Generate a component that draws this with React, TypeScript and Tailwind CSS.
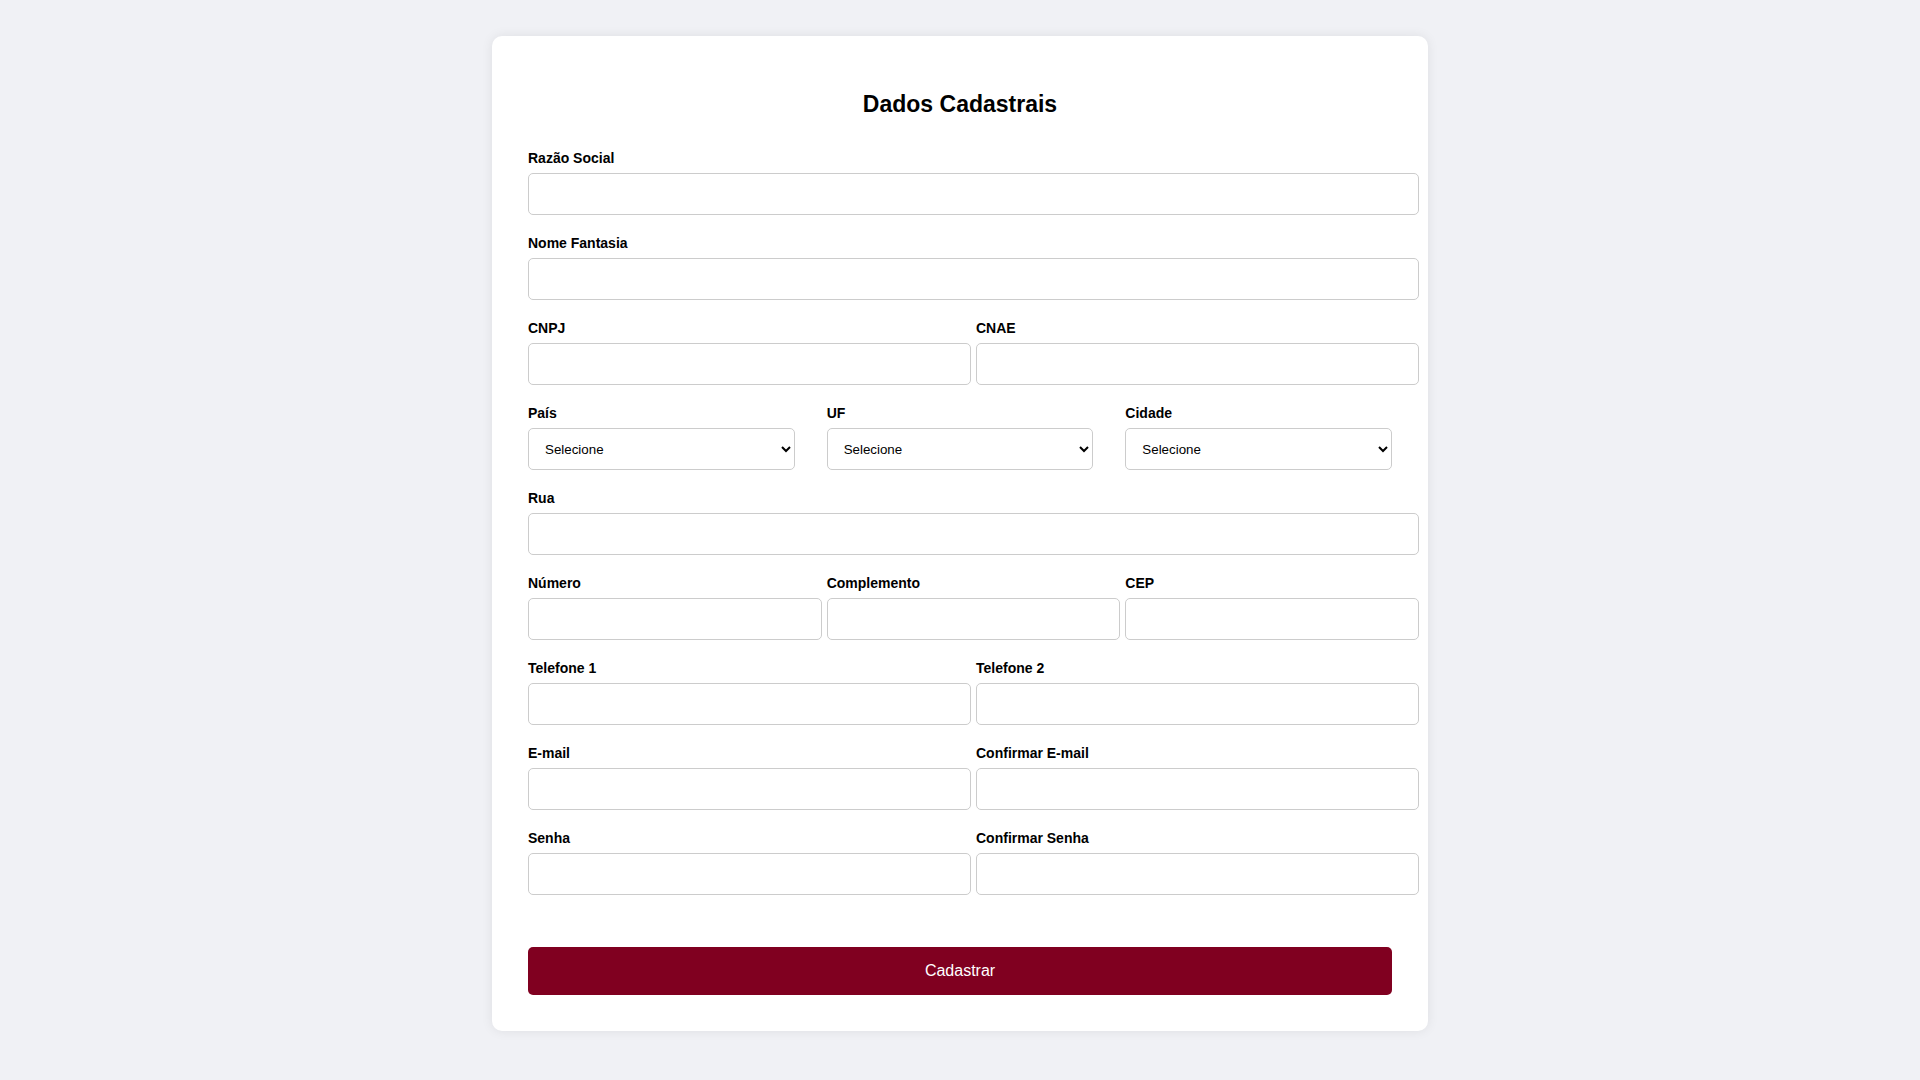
import React from "react";

const font = { fontFamily: '"Liberation Sans", Arial, sans-serif' };

function Field({ label, type = "text" }: { label: string; type?: string }) {
  return (
    <div className="flex flex-col">
      <label className="block text-[14px] leading-[16px] font-bold text-black mb-[7px]">{label}</label>
      <input
        type={type}
        className="w-[calc(100%+27px)] h-[42px] px-3 border border-[#cccccc] rounded-[5px] bg-white text-[13.33px] outline-none"
      />
    </div>
  );
}

function SelectField({ label }: { label: string }) {
  return (
    <div className="flex flex-col">
      <label className="block text-[14px] leading-[16px] font-bold text-black mb-[7px]">{label}</label>
      <select className="w-full h-[42px] px-3 border border-[#cccccc] rounded-[5px] bg-white text-[13.33px] text-black outline-none">
        <option>Selecione</option>
      </select>
    </div>
  );
}

export default function App() {
  return (
    <div className="min-h-screen bg-[#f0f1f5] pt-9 pb-12" style={font}>
      <div className="mx-auto w-[936px] bg-white rounded-[10px] shadow-[0_0_12px_rgba(0,0,0,0.08)] p-9">
        <h2 className="text-center text-[23px] leading-[26px] font-bold text-black mt-[19px] mb-[33px]">Dados Cadastrais</h2>

        <form className="flex flex-col" onSubmit={(e) => e.preventDefault()}>
          <div className="flex flex-col gap-[20px]">
            <Field label="Razão Social" />
            <Field label="Nome Fantasia" />
            <div className="grid grid-cols-2 gap-8">
              <Field label="CNPJ" />
              <Field label="CNAE" />
            </div>
            <div className="grid grid-cols-3 gap-8">
              <SelectField label="País" />
              <SelectField label="UF" />
              <SelectField label="Cidade" />
            </div>
            <Field label="Rua" />
            <div className="grid grid-cols-3 gap-8">
              <Field label="Número" />
              <Field label="Complemento" />
              <Field label="CEP" />
            </div>
            <div className="grid grid-cols-2 gap-8">
              <Field label="Telefone 1" />
              <Field label="Telefone 2" />
            </div>
            <div className="grid grid-cols-2 gap-8">
              <Field label="E-mail" type="email" />
              <Field label="Confirmar E-mail" type="email" />
            </div>
            <div className="grid grid-cols-2 gap-8">
              <Field label="Senha" type="password" />
              <Field label="Confirmar Senha" type="password" />
            </div>
          </div>

          <button
            type="submit"
            className="mt-[52px] w-full h-[48px] rounded-[5px] bg-[#800020] text-white text-[16px]"
          >
            Cadastrar
          </button>
        </form>
      </div>
    </div>
  );
}
